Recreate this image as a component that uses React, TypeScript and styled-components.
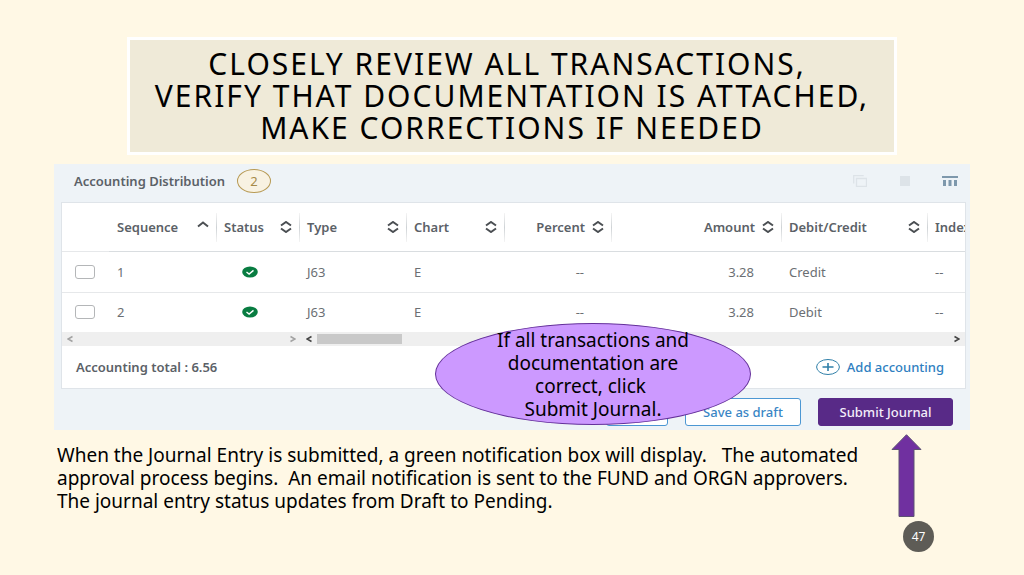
import React from "react";
import styled, { createGlobalStyle, css } from "styled-components";

const GlobalStyle = createGlobalStyle`
  *, *::before, *::after { box-sizing: border-box; }
  body { margin: 0; background: #fff8e5; }
  button, input { font: inherit; margin: 0; }
`;

const Slide = styled.main`
  min-height: 100vh;
  padding: 37px 54px 16px;
  background: #fff8e5;
  color: #000;
  font-family: "Noto Sans", "Open Sans", sans-serif;
`;

const Title = styled.h1`
  margin: 0 73px 9px;
  padding: 8px 0;
  border: 3px solid #fff;
  background: #efead8;
  font-size: 30px;
  font-weight: 400;
  line-height: 32px;
  letter-spacing: 2px;
  text-align: center;
  text-transform: uppercase;
`;

const Panel = styled.section`
  position: relative;
  padding: 0 4px 0 7px;
  background: #eef3f7;
  color: #5b6167;
  font-family: "Noto Sans", "Open Sans", sans-serif;
  font-size: 13px;
`;

const PanelHeader = styled.header`
  display: flex;
  align-items: center;
  height: 38px;
  padding: 0 5px 4px 13px;
`;

const PanelTitle = styled.h2`
  margin: 0 12px 0 0;
  font-size: 13px;
  font-weight: 600;
`;

const Count = styled.span`
  display: grid;
  place-items: center;
  width: 34px;
  height: 24px;
  border: 1px solid #b79a55;
  border-radius: 50%;
  background: #f8f2e2;
  color: #a58a48;
`;

const Tools = styled.div`
  display: flex;
  gap: 23px;
  margin-left: auto;
`;

const ToolButton = styled.button`
  display: grid;
  place-items: center;
  width: 22px;
  height: 20px;
  padding: 0;
  border: 0;
  background: none;
`;

const Card = styled.div`
  overflow: hidden;
  border: 1px solid #dfe4e9;
  background: #fff;
`;

const Table = styled.table`
  width: 100%;
  table-layout: fixed;
  border-collapse: collapse;
`;

type Align = "left" | "right" | "center";

const HeadCell = styled.th`
  position: relative;
  height: 48px;
  padding: 0 7px 0 8px;
  border-bottom: 1px solid #d9dde0;
  font-weight: 600;
  white-space: nowrap;
  overflow: hidden;

  & + &::before {
    content: "";
    position: absolute;
    left: 0;
    top: 10px;
    width: 1px;
    height: 29px;
    background: linear-gradient(#f4f4f4, #cfd3d6, #f4f4f4);
  }
`;

const SortButton = styled.button<{ $align: Align }>`
  display: flex;
  align-items: center;
  justify-content: ${(p) => (p.$align === "right" ? "flex-end" : "space-between")};
  gap: 7px;
  width: 100%;
  padding: 0;
  border: 0;
  background: none;
  color: inherit;
  font-weight: 600;
`;

const Cell = styled.td<{ $align?: Align }>`
  height: 40px;
  padding: 0 7px 0 8px;
  color: #6b6f73;
  text-align: ${(p) => p.$align ?? "left"};
  ${(p) => p.$align === "right" && css`padding-right: 27px;`}
  ${(p) => p.$align === "center" && css`padding-right: 24px;`}

  tr:first-child > & { border-bottom: 1px solid #e6e8ea; height: 41px; }
`;

const StatusSvg = styled.svg`
  display: block;
  margin: 0 auto;
`;

const Check = styled.input`
  appearance: none;
  display: block;
  width: 20px;
  height: 14px;
  margin-left: 5px;
  border: 1px solid #b4b6b8;
  border-radius: 3px;
  background: #fff;
`;

const Scrolls = styled.div`
  display: flex;
  height: 14px;
  background: #efefef;
`;

const Track = styled.div<{ $width?: string; $muted?: boolean }>`
  display: flex;
  align-items: center;
  flex: ${(p) => (p.$width ? `0 0 ${p.$width}` : "1")};
  padding: 0 5px;
  color: ${(p) => (p.$muted ? "#a2a2a2" : "#444")};
  svg:last-child { margin-left: auto; }
`;

const Thumb = styled.div`
  width: 85px;
  height: 10px;
  margin-left: 5px;
  background: #c9c9c9;
`;

const Totals = styled.div`
  display: flex;
  align-items: center;
  justify-content: space-between;
  height: 42px;
  padding: 0 21px 0 14px;
  font-weight: 600;
`;

const AddButton = styled.button`
  display: flex;
  align-items: center;
  gap: 7px;
  padding: 0;
  border: 0;
  background: none;
  color: #2f7fc1;
  font-weight: 500;
`;

const Actions = styled.div`
  display: flex;
  justify-content: flex-end;
  gap: 17px;
  padding: 9px 13px 4px;
`;

const Action = styled.button<{ $width: number; $primary?: boolean }>`
  width: ${(p) => p.$width}px;
  height: 28px;
  padding: 0;
  border: 1px solid ${(p) => (p.$primary ? "#582a87" : "#4c97d3")};
  border-radius: 3px;
  background: ${(p) => (p.$primary ? "#582a87" : "#fff")};
  color: ${(p) => (p.$primary ? "#f4eefa" : "#3a86c5")};
  font-weight: 500;
`;

const Callout = styled.div`
  position: absolute;
  left: 381px;
  bottom: 5px;
  display: grid;
  place-items: center;
  width: 316px;
  height: 102px;
  padding-top: 2px;
  border: 1px solid #64309a;
  border-radius: 50%;
  background: #cc99ff;
  color: #000;
  font-size: 19px;
  line-height: 23px;
  text-align: center;
  white-space: nowrap;
`;

const Footer = styled.footer`
  display: flex;
  justify-content: space-between;
  padding: 4px 36px 0 3px;
`;

const Note = styled.p`
  margin: 10px 0 0;
  font-size: 19px;
  line-height: 23px;
  white-space: pre-wrap;
`;

const Aside = styled.div`
  display: flex;
  flex-direction: column;
  flex: 0 0 43px;
  gap: 4px;
`;

const PageNumber = styled.span`
  display: grid;
  place-items: center;
  align-self: flex-end;
  width: 31px;
  height: 31px;
  border-radius: 50%;
  background: #5e5c56;
  color: #fff;
  font-size: 12px;
`;

const SortIcon = ({ single }: { single?: boolean }) => (
  <svg width="12" height="12" viewBox="0 0 12 12" fill="none" stroke="#4b4f53" strokeWidth="2">
    {single ? <path d="M1 5.5 6 1.5l5 4" /> : <path d="M1 4.5 6 1l5 3.5M1 7.5 6 11l5-3.5" />}
  </svg>
);

const Chevron = ({ right }: { right?: boolean }) => (
  <svg width="6" height="8" viewBox="0 0 6 8" fill="none" stroke="currentColor" strokeWidth="1.6">
    <path d={right ? "M.5 1.5 5 4 .5 6.5" : "M5.5 1.5 1 4l4.5 2.5"} />
  </svg>
);

const StatusIcon = () => (
  <StatusSvg width="16" height="12" viewBox="0 0 16 12" role="img" aria-label="Complete">
    <ellipse cx="8" cy="6" rx="7.8" ry="5.5" fill="#087c41" />
    <path d="m4.5 6 2.6 2 4.4-3.6" fill="none" stroke="#fff" strokeWidth="1.4" />
  </StatusSvg>
);

const columns: { label: string; width: number; align: Align; single?: boolean }[] = [
  { label: "Sequence", width: 107, align: "left", single: true },
  { label: "Status", width: 83, align: "left" },
  { label: "Type", width: 107, align: "left" },
  { label: "Chart", width: 98, align: "left" },
  { label: "Percent", width: 107, align: "right" },
  { label: "Amount", width: 170, align: "right" },
  { label: "Debit/Credit", width: 146, align: "left" },
];

const rows = [
  { sequence: 1, type: "J63", chart: "E", percent: "--", amount: "3.28", side: "Credit", index: "--" },
  { sequence: 2, type: "J63", chart: "E", percent: "--", amount: "3.28", side: "Debit", index: "--" },
];

export default function App() {
  return (
    <Slide>
      <GlobalStyle />
      <Title>
        Closely review all transactions,&nbsp;
        <br />
        verify that documentation is attached,
        <br />
        make corrections if needed
      </Title>

      <Panel>
        <PanelHeader>
          <PanelTitle>Accounting Distribution</PanelTitle>
          <Count>2</Count>
          <Tools>
            <ToolButton aria-label="Copy" disabled>
              <svg width="14" height="12" viewBox="0 0 14 12" fill="none" stroke="#dde3e8" strokeWidth="1.3">
                <path d="M3.5 3.5h10v8h-10zM.7 8.5V.7h10" />
              </svg>
            </ToolButton>
            <ToolButton aria-label="Delete" disabled>
              <svg width="12" height="12" viewBox="0 0 12 12" fill="#dde3e8">
                <path d="M1 1h10v10H1z" />
              </svg>
            </ToolButton>
            <ToolButton aria-label="Columns">
              <svg width="16" height="12" viewBox="0 0 16 12" fill="#7e98ac">
                <path d="M0 1h16v2H0zM1 5h3v6H1zM6.5 5h3v6h-3zM12 5h3v6h-3z" />
              </svg>
            </ToolButton>
          </Tools>
        </PanelHeader>

        <Card>
          <Table>
            <colgroup>
              <col width={47} />
              {columns.map((c) => (
                <col key={c.label} width={c.width} />
              ))}
              <col width={38} />
            </colgroup>
            <thead>
              <tr>
                <Cell />
                {columns.map((c) => (
                  <HeadCell key={c.label} scope="col">
                    <SortButton $align={c.align}>
                      {c.label}
                      <SortIcon single={c.single} />
                    </SortButton>
                  </HeadCell>
                ))}
                <HeadCell scope="col">
                  <SortButton $align="left">Index</SortButton>
                </HeadCell>
              </tr>
            </thead>
            <tbody>
              {rows.map((r) => (
                <tr key={r.sequence}>
                  <Cell>
                    <Check type="checkbox" aria-label={`Select row ${r.sequence}`} />
                  </Cell>
                  <Cell>{r.sequence}</Cell>
                  <Cell $align="center">
                    <StatusIcon />
                  </Cell>
                  <Cell>{r.type}</Cell>
                  <Cell>{r.chart}</Cell>
                  <Cell $align="right">{r.percent}</Cell>
                  <Cell $align="right">{r.amount}</Cell>
                  <Cell>{r.side}</Cell>
                  <Cell>{r.index}</Cell>
                </tr>
              ))}
            </tbody>
          </Table>
          <Scrolls>
            <Track $width="239px" $muted>
              <Chevron />
              <Chevron right />
            </Track>
            <Track>
              <Chevron />
              <Thumb />
              <Chevron right />
            </Track>
          </Scrolls>
          <Totals>
            <span>Accounting total : 6.56</span>
            <AddButton>
              <svg width="24" height="16" viewBox="0 0 24 16" fill="none" stroke="#2f7fa8">
                <ellipse cx="12" cy="8" rx="11.4" ry="7.5" />
                <path d="M6.5 8h11M12 4v8" strokeWidth="1.6" />
              </svg>
              Add accounting
            </AddButton>
          </Totals>
        </Card>

        <Actions>
          <Action $width={62} aria-label="Cancel" />
          <Action $width={116}>Save as draft</Action>
          <Action $width={135} $primary>
            Submit Journal
          </Action>
        </Actions>

        <Callout>
          <span>
            If all transactions and
            <br />
            documentation are
            <br />
            correct, click&nbsp;
            <br />
            Submit Journal.
          </span>
        </Callout>
      </Panel>

      <Footer>
        <Note>
          {"When the Journal Entry is submitted, a green notification box will display.   The automated\n"}
          {"approval process begins.  An email notification is sent to the FUND and ORGN approvers.\n"}
          {"The journal entry status updates from Draft to Pending."}
        </Note>
        <Aside>
          <svg width="31" height="83" viewBox="0 0 31 83" aria-hidden="true">
            <path d="M15.5.7 30 15.5h-7v67H8v-67H1z" fill="#7030a0" stroke="#5d5273" />
          </svg>
          <PageNumber>47</PageNumber>
        </Aside>
      </Footer>
    </Slide>
  );
}
